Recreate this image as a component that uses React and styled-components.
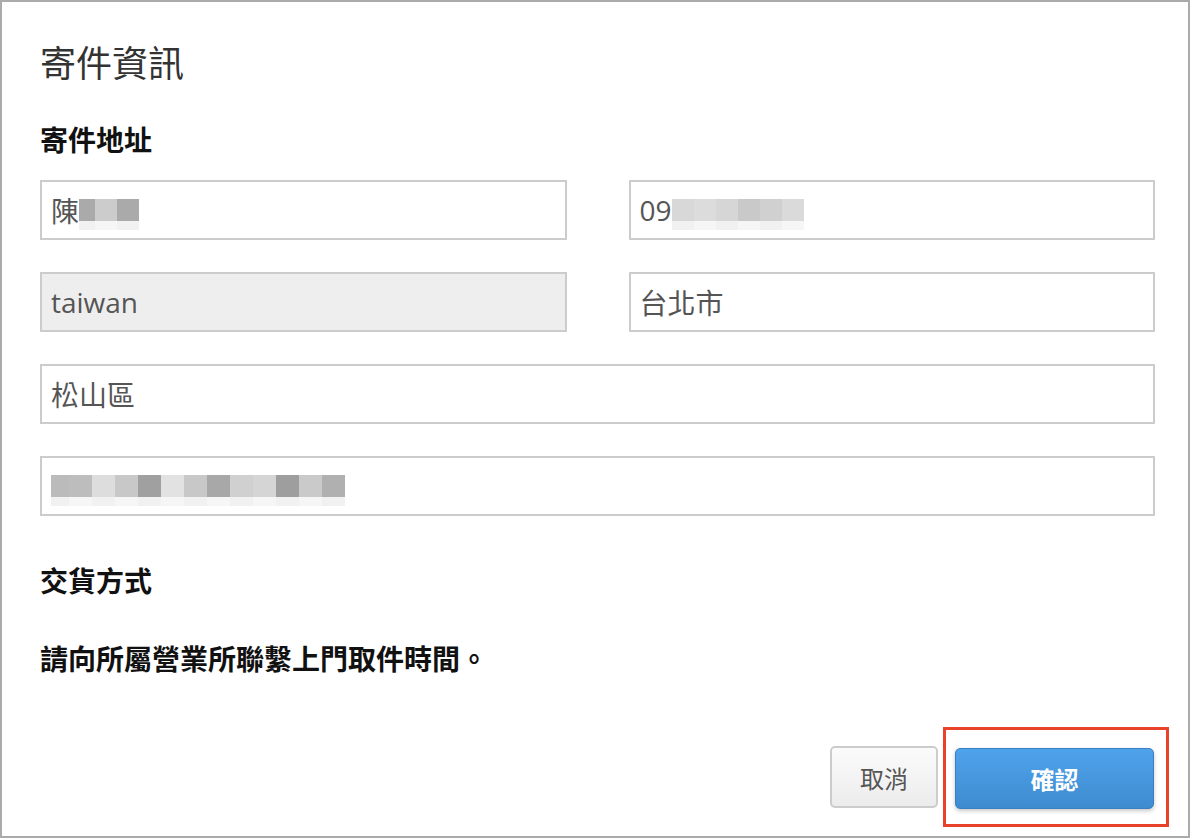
import React from "react";
import styled, { createGlobalStyle } from "styled-components";

const GlobalStyle = createGlobalStyle`
  html, body {
    margin: 0;
    padding: 0;
    background: #fff;
  }
  body {
    font-family: "Open Sans", "Noto Sans CJK TC", sans-serif;
  }
  * {
    box-sizing: border-box;
  }
`;

const Frame = styled.div`
  width: 1190px;
  height: 838px;
  border: 2px solid #ababab;
  background: #fff;
  padding: 44px 19px 9px 38px;
  display: flex;
  flex-direction: column;
`;

const Title = styled.h1`
  margin: 0;
  font-size: 36px;
  line-height: 36px;
  font-weight: 400;
  color: #333;
`;

const SectionTitle = styled.h2`
  margin: ${(p) => p.$top}px 0 0;
  font-size: 28px;
  line-height: 28px;
  font-weight: 700;
  color: #111;
`;

const Note = styled.p`
  margin: 50px 0 0;
  font-size: 28px;
  line-height: 28px;
  font-weight: 700;
  color: #111;
`;

const FieldGrid = styled.div`
  margin: 26px 14px 0 0;
  display: grid;
  grid-template-columns: 1fr 1fr;
  column-gap: 62px;
  row-gap: 32px;
`;

const Field = styled.div`
  grid-column: ${(p) => (p.$wide ? "1 / -1" : "auto")};
  height: 60px;
  border: 2px solid #ccc;
  background: ${(p) => (p.$disabled ? "#eee" : "#fff")};
  color: #555;
  font-size: 28px;
  padding: 0 9px;
  display: flex;
  align-items: center;
`;

const Mosaic = styled.span`
  display: inline-flex;
  flex-direction: column;
  margin-top: 8px;
`;

const MosaicRow = styled.span`
  display: flex;
`;

const Cell = styled.span`
  display: block;
  width: ${(p) => p.$w}px;
  height: ${(p) => p.$h}px;
  background: ${(p) => p.$c};
`;

const Actions = styled.div`
  margin-top: auto;
  display: flex;
  justify-content: flex-end;
  align-items: center;
  gap: 5px;
`;

const CancelButton = styled.button`
  width: 108px;
  height: 62px;
  border: 2px solid #ccc;
  border-radius: 5px;
  background: linear-gradient(#fbfbfb, #ececec);
  color: #555;
  font-family: "Open Sans", "Noto Sans CJK TC", sans-serif;
  font-size: 24px;
  cursor: pointer;
`;

const Highlight = styled.div`
  border: 3px solid #e8432a;
  padding: 18px 12px 15px 9px;
  display: flex;
`;

const ConfirmButton = styled.button`
  width: 199px;
  height: 61px;
  border: 1px solid #3b7fc2;
  border-radius: 5px;
  background: linear-gradient(#4fa3eb, #3e8bd0);
  box-shadow: 0 2px 4px rgba(0, 0, 0, 0.22);
  color: #fff;
  font-family: "Open Sans", "Noto Sans CJK TC", sans-serif;
  font-size: 24px;
  font-weight: 700;
  cursor: pointer;
`;

// blurred values in the screenshot, drawn as pixel blocks
function Blur({ cells, w = 22 }) {
  return (
    <Mosaic>
      <MosaicRow>
        {cells.map((c, i) => (
          <Cell key={i} $w={Array.isArray(c) ? c[1] : w} $h={22} $c={Array.isArray(c) ? c[0] : c} />
        ))}
      </MosaicRow>
      <MosaicRow>
        {cells.map((c, i) => (
          <Cell key={i} $w={Array.isArray(c) ? c[1] : w} $h={9} $c={i % 2 ? "#f6f6f6" : "#f1f1f1"} />
        ))}
      </MosaicRow>
    </Mosaic>
  );
}

export default function App() {
  return (
    <>
      <GlobalStyle />
      <Frame>
        <Title>寄件資訊</Title>
        <SectionTitle $top={44}>寄件地址</SectionTitle>

        <FieldGrid>
          <Field>
            陳
            <Blur cells={[["#aaa", 16], ["#ccc", 22], ["#aaa", 22]]} />
          </Field>
          <Field>
            09
            <Blur
              w={22}
              cells={["#d8d8d8", "#dcdcdc", "#d6d6d6", "#c9c9c9", "#d0d0d0", "#dadada"]}
            />
          </Field>
          <Field $disabled>taiwan</Field>
          <Field>台北市</Field>
          <Field $wide>松山區</Field>
          <Field $wide>
            <Blur
              w={23}
              cells={[
                ["#bbb", 18],
                "#bdbdbd",
                "#ddd",
                "#c8c8c8",
                "#a0a0a0",
                "#e2e2e2",
                "#c8c8c8",
                "#a8a8a8",
                "#d0d0d0",
                "#d5d5d5",
                "#9e9e9e",
                "#cacaca",
                "#b0b0b0",
              ]}
            />
          </Field>
        </FieldGrid>

        <SectionTitle $top={51}>交貨方式</SectionTitle>
        <Note>請向所屬營業所聯繫上門取件時間。</Note>

        <Actions>
          <CancelButton>取消</CancelButton>
          <Highlight>
            <ConfirmButton>確認</ConfirmButton>
          </Highlight>
        </Actions>
      </Frame>
    </>
  );
}
